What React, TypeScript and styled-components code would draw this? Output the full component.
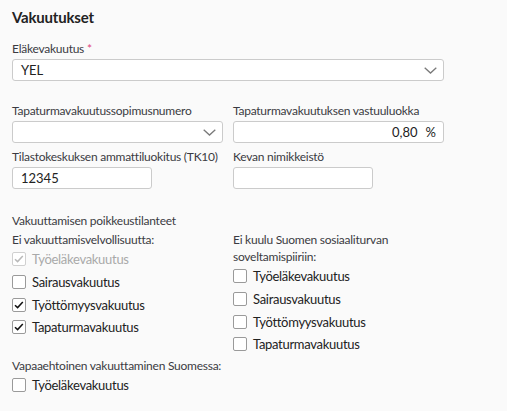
import React from 'react';
import styled, { createGlobalStyle } from 'styled-components';

const GlobalStyle = createGlobalStyle`
  body {
    margin: 0;
    background: #fafafa;
    font-family: Lato, 'Liberation Sans', sans-serif;
    color: #222;
  }
`;

const Page = styled.div`
  padding: 7px 12px 0 12px;
  width: 432px;
`;

const Title = styled.h2`
  margin: 0 0 14px 0;
  font-size: 15px;
  line-height: 20px;
  letter-spacing: -0.2px;
  font-weight: 700;
  color: #222;
`;

const Field = styled.div<{ $mt?: number }>`
  display: flex;
  flex-direction: column;
  margin-top: ${(p) => p.$mt || 0}px;
`;

const Label = styled.label`
  font-size: 12px;
  line-height: 16px;
  letter-spacing: -0.25px;
  color: #3a3a42;
  margin-bottom: 2px;
  white-space: nowrap;
`;

const Star = styled.span`
  color: #e0457b;
  margin-left: 3px;
`;

const Row = styled.div<{ $mt?: number }>`
  display: grid;
  grid-template-columns: 211px 211px;
  column-gap: 10px;
  margin-top: ${(p) => p.$mt || 0}px;
`;

const Box = styled.div<{ $width?: number; $align?: string }>`
  box-sizing: border-box;
  height: 22px;
  width: ${(p) => (p.$width ? `${p.$width}px` : '100%')};
  border: 1px solid #cbcbcb;
  border-radius: 3px;
  background: #fff;
  display: flex;
  align-items: center;
  justify-content: ${(p) => p.$align || 'space-between'};
  padding: 0 6px 0 8px;
  font-size: 13px;
  color: #222;
`;

const Unit = styled.span`
  margin-left: 8px;
  margin-right: 1px;
`;

const Section = styled.div`
  margin-top: 23px;
`;

const Heading = styled.div<{ $mt?: number }>`
  font-size: 12px;
  line-height: 17px;
  letter-spacing: -0.25px;
  color: #3a3a42;
  margin-top: ${(p) => p.$mt || 0}px;
`;

const Columns = styled.div`
  display: grid;
  grid-template-columns: 211px 211px;
  column-gap: 10px;
  align-items: start;
  margin-top: 1px;
`;

const List = styled.div`
  display: flex;
  flex-direction: column;
  padding-top: 1px;
`;

const CheckRow = styled.div<{ $disabled?: boolean }>`
  display: flex;
  align-items: center;
  height: 22.7px;
  font-size: 13px;
  letter-spacing: -0.3px;
  color: ${(p) => (p.$disabled ? '#a9a9a9' : '#222')};
`;

const CheckBox = styled.span<{ $disabled?: boolean }>`
  box-sizing: border-box;
  width: 14px;
  height: 14px;
  border: 1px solid ${(p) => (p.$disabled ? '#d0d0d0' : '#9a9a9a')};
  border-radius: 2px;
  background: #fff;
  margin-right: 6px;
  display: flex;
  align-items: center;
  justify-content: center;
  flex-shrink: 0;
`;

const Chevron = () => (
  <svg width="13" height="7" viewBox="0 0 13 7">
    <polyline points="0.7,0.7 6.5,6 12.3,0.7" fill="none" stroke="#7a7a7a" strokeWidth="1.3" />
  </svg>
);

function Check({ label, checked, disabled }: { label: string; checked?: boolean; disabled?: boolean }) {
  return (
    <CheckRow $disabled={disabled}>
      <CheckBox $disabled={disabled}>
        {checked && (
          <svg width="10" height="8" viewBox="0 0 10 8">
            <polyline
              points="1,4.2 3.6,6.6 8.8,1"
              fill="none"
              stroke={disabled ? '#b8b8b8' : '#111'}
              strokeWidth="1.5"
            />
          </svg>
        )}
      </CheckBox>
      {label}
    </CheckRow>
  );
}

export default function App() {
  return (
    <>
      <GlobalStyle />
      <Page>
        <Title>Vakuutukset</Title>
        <Field>
          <Label>
            Eläkevakuutus<Star>*</Star>
          </Label>
          <Box>
            YEL
            <Chevron />
          </Box>
        </Field>

        <Row $mt={22}>
          <Field>
            <Label>Tapaturmavakuutussopimusnumero</Label>
            <Box>
              <span />
              <Chevron />
            </Box>
          </Field>
          <Field>
            <Label>Tapaturmavakuutuksen vastuuluokka</Label>
            <Box $align="flex-end">
              0,80<Unit>%</Unit>
            </Box>
          </Field>
        </Row>

        <Row $mt={6}>
          <Field>
            <Label>Tilastokeskuksen ammattiluokitus (TK10)</Label>
            <Box $width={140} $align="flex-start">12345</Box>
          </Field>
          <Field>
            <Label>Kevan nimikkeistö</Label>
            <Box $width={140} />
          </Field>
        </Row>

        <Section>
          <Heading>Vakuuttamisen poikkeustilanteet</Heading>
          <Columns>
            <List>
              <Heading>Ei vakuuttamisvelvollisuutta:</Heading>
              <Check label="Työeläkevakuutus" checked disabled />
              <Check label="Sairausvakuutus" />
              <Check label="Työttömyysvakuutus" checked />
              <Check label="Tapaturmavakuutus" checked />
            </List>
            <List>
              <Heading>
                Ei kuulu Suomen sosiaaliturvan
                <br />
                soveltamispiiriin:
              </Heading>
              <Check label="Työeläkevakuutus" />
              <Check label="Sairausvakuutus" />
              <Check label="Työttömyysvakuutus" />
              <Check label="Tapaturmavakuutus" />
            </List>
          </Columns>
          <Heading $mt={1}>Vapaaehtoinen vakuuttaminen Suomessa:</Heading>
          <Check label="Työeläkevakuutus" />
        </Section>
      </Page>
    </>
  );
}
